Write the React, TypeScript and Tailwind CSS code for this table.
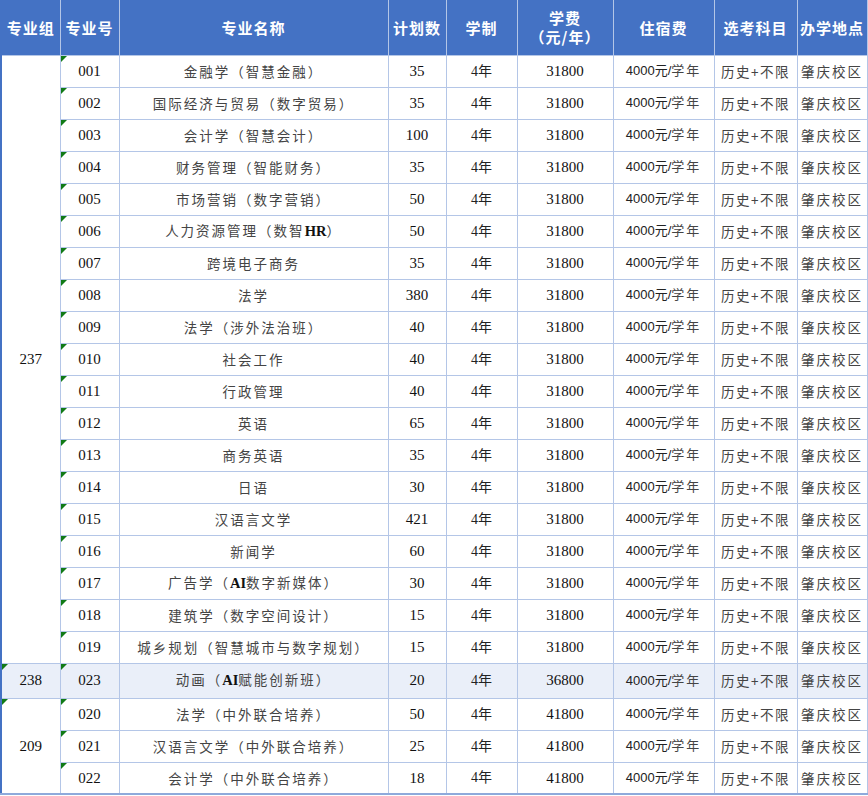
import * as React from "react";

type Row = { no: string; name: string; plan: string; fee: string };

const g237: Row[] = [
  { no: "001", name: "金融学（智慧金融）", plan: "35", fee: "31800" },
  { no: "002", name: "国际经济与贸易（数字贸易）", plan: "35", fee: "31800" },
  { no: "003", name: "会计学（智慧会计）", plan: "100", fee: "31800" },
  { no: "004", name: "财务管理（智能财务）", plan: "35", fee: "31800" },
  { no: "005", name: "市场营销（数字营销）", plan: "50", fee: "31800" },
  { no: "006", name: "人力资源管理（数智HR）", plan: "50", fee: "31800" },
  { no: "007", name: "跨境电子商务", plan: "35", fee: "31800" },
  { no: "008", name: "法学", plan: "380", fee: "31800" },
  { no: "009", name: "法学（涉外法治班）", plan: "40", fee: "31800" },
  { no: "010", name: "社会工作", plan: "40", fee: "31800" },
  { no: "011", name: "行政管理", plan: "40", fee: "31800" },
  { no: "012", name: "英语", plan: "65", fee: "31800" },
  { no: "013", name: "商务英语", plan: "35", fee: "31800" },
  { no: "014", name: "日语", plan: "30", fee: "31800" },
  { no: "015", name: "汉语言文学", plan: "421", fee: "31800" },
  { no: "016", name: "新闻学", plan: "60", fee: "31800" },
  { no: "017", name: "广告学（AI数字新媒体）", plan: "30", fee: "31800" },
  { no: "018", name: "建筑学（数字空间设计）", plan: "15", fee: "31800" },
  { no: "019", name: "城乡规划（智慧城市与数字规划）", plan: "15", fee: "31800" },
];

const g238: Row[] = [
  { no: "023", name: "动画（AI赋能创新班）", plan: "20", fee: "36800" },
];

const g209: Row[] = [
  { no: "020", name: "法学（中外联合培养）", plan: "50", fee: "41800" },
  { no: "021", name: "汉语言文学（中外联合培养）", plan: "25", fee: "41800" },
  { no: "022", name: "会计学（中外联合培养）", plan: "18", fee: "41800" },
];

const groups = [
  { id: "237", rows: g237, h: "h-[32px]", bg: "" },
  { id: "238", rows: g238, h: "h-[35px]", bg: "bg-[#eaeff9]" },
  { id: "209", rows: g209, h: "h-[32px]", bg: "" },
];

const Flag = () => (
  <span className="absolute left-0 top-0 h-0 w-0 border-t-[6px] border-r-[6px] border-t-[#117a17] border-r-transparent" />
);

// latin bits (AI, HR) are bold serif in the sheet
const Name = ({ text }: { text: string }) => {
  const parts = text.split(/([A-Z]+)/);
  return (
    <>
      {parts.map((p, i) =>
        /^[A-Z]+$/.test(p) ? (
          <span key={i} className="font-['Liberation_Serif',serif] font-bold text-[14.5px] text-[#111] tracking-normal">
            {p}
          </span>
        ) : (
          <React.Fragment key={i}>{p}</React.Fragment>
        )
      )}
    </>
  );
};

const cell = "border border-[#b4c6e7] text-center align-middle p-0";
const serif = "font-['Liberation_Serif','Noto_Sans_CJK_SC',serif] text-[15px] text-[#111]";
const cjk = "font-['Noto_Sans_CJK_SC',sans-serif] text-[13.5px] text-[#444] tracking-[2px]";

const headers = [
  { t: "专业组", w: "w-[59px]" },
  { t: "专业号", w: "w-[59px]" },
  { t: "专业名称", w: "w-[269px]" },
  { t: "计划数", w: "w-[58px]" },
  { t: "学制", w: "w-[71px]" },
  { t: "学费\n（元/年）", w: "w-[96px]" },
  { t: "住宿费", w: "w-[101px]" },
  { t: "选考科目", w: "w-[83px]" },
  { t: "办学地点", w: "w-[70px]" },
];

export default function App() {
  return (
    <div className="w-[868px] h-[796px] bg-white overflow-hidden">
      <table className="table-fixed border-collapse w-[867px] border-l-2 border-l-[#4472c4] border-b-2 border-b-[#8eaadb]">
        <thead>
          <tr className="h-[55px] bg-[#4472c4]">
            {headers.map((h) => (
              <th
                key={h.t}
                className={`${h.w} border-x border-x-[#b4c6e7] p-0 text-center align-middle whitespace-pre-line font-['Noto_Sans_CJK_SC',sans-serif] text-[15px] font-bold leading-[19px] tracking-[1px] text-white`}
              >
                {h.t}
              </th>
            ))}
          </tr>
        </thead>
        <tbody>
          {groups.map((g) =>
            g.rows.map((r, i) => (
              <tr key={r.no} className={`${g.h} ${g.bg}`}>
                {i === 0 && (
                  <td rowSpan={g.rows.length} className={`${cell} ${serif} relative`}>
                    {g.id !== "237" && <Flag />}
                    {g.id}
                  </td>
                )}
                <td className={`${cell} ${serif} relative`}>
                  <Flag />
                  {r.no}
                </td>
                <td className={`${cell} ${cjk}`}>
                  <Name text={r.name} />
                </td>
                <td className={`${cell} ${serif}`}>{r.plan}</td>
                <td className={`${cell} font-['Liberation_Serif','Noto_Sans_CJK_SC',serif] text-[14px] text-[#222]`}>4年</td>
                <td className={`${cell} ${serif}`}>{r.fee}</td>
                <td className={`${cell} font-['Liberation_Sans','Noto_Sans_CJK_SC',sans-serif] text-[13px] text-[#222]`}>
                  4000元/<span className="tracking-[2px] text-[#444]">学年</span>
                </td>
                <td className={`${cell} font-['Noto_Sans_CJK_SC',sans-serif] text-[13.5px] text-[#444] tracking-[1.5px]`}>历史+不限</td>
                <td className={`${cell} font-['Noto_Sans_CJK_SC',sans-serif] text-[13.5px] text-[#444] tracking-[2px]`}>肇庆校区</td>
              </tr>
            ))
          )}
        </tbody>
      </table>
    </div>
  );
}
